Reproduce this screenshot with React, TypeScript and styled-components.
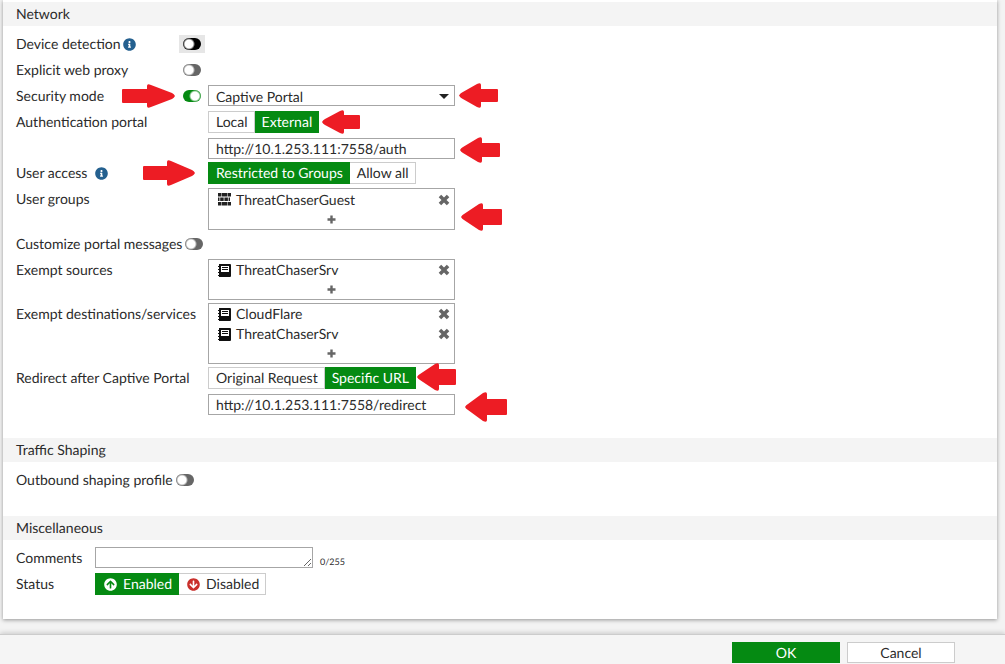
import React, { useState } from "react";
import styled, { createGlobalStyle, css } from "styled-components";
import { FaArrowCircleDown, FaArrowCircleUp, FaInfoCircle } from "react-icons/fa";

const GREEN = "#058a12";

const GlobalStyle = createGlobalStyle`
  *, *::before, *::after { box-sizing: border-box; }
  body {
    margin: 0;
    background: #f3f3f3;
    color: #2b2b2b;
    font: 14px/22px Lato, sans-serif;
    text-rendering: geometricPrecision;
  }
  button, input, select, textarea { font: inherit; color: inherit; text-rendering: inherit; }
`;

const Page = styled.div`
  display: flex;
  flex-direction: column;
  min-height: 100vh;
`;

const Card = styled.main`
  margin: 0 8px 15px 3px;
  padding-top: 2px;
  background: #fff;
  box-shadow: 0 1px 4px rgba(0, 0, 0, 0.4);
`;

const Section = styled.section`
  padding-bottom: 23px;

  &:last-child { padding-bottom: 22px; }
`;

const SectionTitle = styled.h2`
  margin: 0 0 5px;
  padding: 0 13px;
  background: #f4f4f4;
  font-size: 14px;
  font-weight: 400;
  line-height: 24px;
`;

const Row = styled.div<{ $labelWidth?: number }>`
  position: relative;
  display: grid;
  grid-template-columns: ${(p) => p.$labelWidth ?? 192}px minmax(0, 1fr);
  align-items: start;
  min-height: 26px;
  padding: 2px 13px 1px;

  &:last-child { padding-bottom: 0; }
`;

const LabelCell = styled.div<{ $inline?: boolean }>`
  display: flex;
  align-items: center;
  justify-content: ${(p) => (p.$inline ? "flex-start" : "space-between")};
  gap: 3px;
  height: 22px;
  padding-right: 7px;
  white-space: nowrap;
`;

const LabelText = styled.span<{ $gap?: number }>`
  display: flex;
  align-items: center;
  gap: ${(p) => p.$gap ?? 0}px;
`;

const InfoIcon = styled(FaInfoCircle)`
  width: 13px;
  height: 13px;
  color: #24608f;
`;

const Controls = styled.div`
  display: flex;
  flex-direction: column;
  align-items: flex-start;
  gap: 5px;
`;

const SwitchHalo = styled.span<{ $active?: boolean }>`
  display: flex;
  flex: none;
  margin: -3px -4px;
  padding: 3px 4px;
  background: ${(p) => (p.$active ? "#e6e6e6" : "transparent")};
`;

const Switch = styled.input<{ $active?: boolean }>`
  appearance: none;
  width: 18px;
  height: 12px;
  margin: 0;
  border-radius: 6px;
  background: radial-gradient(circle at 6px 6px, #fff 4px, transparent 6px) ${(p) => (p.$active ? "#000" : "#666")};

  &:checked {
    background: radial-gradient(circle at 12px 6px, #fff 4px, transparent 6px) ${GREEN};
  }
`;

const fieldBox = css`
  width: 247px;
  max-width: 100%;
  border: 1px solid #a6a6a6;
  border-radius: 0;
  background: #fff;
`;

const TextInput = styled.input`
  ${fieldBox}
  height: 21px;
  padding: 0 7px;
`;

const SelectWrap = styled.div`
  position: relative;
  width: 247px;
  max-width: 100%;

  &::after {
    content: "";
    position: absolute;
    top: 9px;
    right: 6px;
    border: 5px solid transparent;
    border-top-color: #222;
    border-bottom: 0;
    pointer-events: none;
  }
`;

const Select = styled.select`
  ${fieldBox}
  display: block;
  appearance: none;
  height: 21px;
  padding: 0 7px;
`;

const Segments = styled.div`
  display: flex;
  height: 22px;
`;

const Segment = styled.label`
  display: flex;
  align-items: center;
  gap: 5px;
  padding: 0 6px 0 7px;
  border: 1px solid #ccc;
  background: #fff;
  line-height: 20px;
  white-space: nowrap;

  & + & { border-left-width: 0; }
  &:has(input:checked) {
    border-color: ${GREEN};
    background: ${GREEN};
    color: #fff;
  }
  input {
    position: absolute;
    appearance: none;
    margin: 0;
  }
  svg { width: 13px; height: 13px; margin: 0 1px; }
`;

const EntryList = styled.ul`
  ${fieldBox}
  margin: 0;
  padding: 0;
  list-style: none;
`;

const Entry = styled.li<{ $tall?: boolean }>`
  display: flex;
  align-items: center;
  gap: 5px;
  height: ${(p) => (p.$tall ? 21 : 20)}px;
  padding: 0 4px 0 8px;
  line-height: 20px;

  span { flex: 1; }
`;

const IconButton = styled.button`
  display: flex;
  padding: 0;
  border: 0;
  background: none;
  color: #666;
`;

const AddLine = styled.li`
  display: flex;
  align-items: center;
  justify-content: center;
  height: 19px;
`;

const Comments = styled.div`
  display: flex;
  align-items: flex-end;
  gap: 7px;
`;

const TextArea = styled.textarea`
  display: block;
  width: 218px;
  height: 21px;
  padding: 0 7px;
  border: 1px solid #a6a6a6;
  line-height: 18px;
  resize: both;
`;

const Counter = styled.span`
  font-size: 9px;
  line-height: 12px;
`;

const Footer = styled.footer`
  display: flex;
  flex: 1;
  align-items: flex-start;
  justify-content: flex-end;
  gap: 7px;
  padding: 7px 50px 1px;
  border-top: 1px solid #ccc;
  background: #f5f5f5;
  box-shadow: 0 -1px 5px rgba(0, 0, 0, 0.18);
`;

const FooterButton = styled.button<{ $primary?: boolean }>`
  width: 108px;
  height: 21px;
  padding: 0;
  border: 1px solid ${(p) => (p.$primary ? GREEN : "#ccc")};
  background: ${(p) => (p.$primary ? GREEN : "#fff")};
  color: ${(p) => (p.$primary ? "#fff" : "inherit")};
  line-height: 18px;
`;

const ArrowSvg = styled.svg<{ $x: number; $y: number }>`
  position: absolute;
  left: ${(p) => p.$x}px;
  top: ${(p) => p.$y}px;
  fill: #ed1c24;
  pointer-events: none;
`;

type ArrowProps = { x: number; y: number; w: number; h: number; right?: boolean };

function Arrow({ x, y, w, h, right }: ArrowProps) {
  const head = right ? 28 : 22;
  const top = Math.round(h * 0.22);
  const d = `M0 ${h / 2} Q1 ${h / 2 - 2} 3 ${h / 2 - 3} L${head - 4} 1 Q${head} -1 ${head} 2 V${top} H${w - 1} Q${w} ${top} ${w} ${top + 1} V${h - top - 1} Q${w} ${h - top} ${w - 1} ${h - top} H${head} V${h - 2} Q${head} ${h + 1} ${head - 4} ${h - 1} L3 ${h / 2 + 3} Q1 ${h / 2 + 2} 0 ${h / 2}Z`;
  return (
    <ArrowSvg $x={x} $y={y} width={w} height={h} aria-hidden="true">
      <path d={d} transform={right ? `translate(${w} 0) scale(-1 1)` : undefined} />
    </ArrowSvg>
  );
}

const CrossIcon = () => (
  <svg width="12" height="12" viewBox="0 0 12 12" fill="currentColor">
    <path d="M3.2 .7 6 3.500 8.800 .7 11.300 3.200 8.500 6 11.300 8.800 8.800 11.300 6 8.500 3.200 11.300 .7 8.800 3.500 6 .7 3.200Z" />
  </svg>
);

const PlusIcon = () => (
  <svg width="9" height="9" viewBox="0 0 9 9" fill="currentColor">
    <path d="M3.300 .5h2.400v2.800H8.500v2.400H5.700v2.800H3.300V5.700H.5V3.300h2.800Z" />
  </svg>
);

const GroupIcon = () => (
  <svg width="14" height="13" viewBox="0 0 14 13" fill="#222">
    <path d="M1 0h3.500v3.500H1zM5 0h5v3.500H5zM10.500 0H14v3.500h-3.500zM1 4.500h1.500v3.500H1zM3.200 4.500h3.500v3.500H3.200zM7.400 4.500h3.500v3.500H7.400zM11.600 4.500H13v3.500h-1.400zM1 9h3.500v3.500H1zM5 9h5v3.500H5zM10.500 9H14v3.500h-3.500z" />
  </svg>
);

const AddressIcon = () => (
  <svg width="14" height="13" viewBox="0 0 14 13">
    <path fill="#111" d="M2 0h11q1 0 1 1v11q0 1-1 1H2v-1H1v-1h1V9H1V8h1V6H1V5h1V3H1V2h1Z" />
    <path fill="#fff" d="M4 2h8v6H4z" />
    <path fill="#111" d="M5 3h6v1H5zM5 5h6v1H5z" />
  </svg>
);

type LabelProps = { text: string; htmlFor?: string; info?: number; toggle?: string; on?: boolean; active?: boolean; inline?: boolean };

function Label({ text, htmlFor, info, toggle, on, active, inline }: LabelProps) {
  return (
    <LabelCell $inline={inline}>
      <LabelText $gap={info}>
        {toggle || htmlFor ? <label htmlFor={toggle ?? htmlFor}>{text}</label> : text}
        {info !== undefined && <InfoIcon aria-label="Information" />}
      </LabelText>
      {toggle && (
        <SwitchHalo $active={active}>
          <Switch id={toggle} type="checkbox" role="switch" defaultChecked={on} $active={active} />
        </SwitchHalo>
      )}
    </LabelCell>
  );
}

type Option = { label: string; icon?: React.ReactNode };

function Choice({ name, label, options, initial }: { name: string; label: string; options: Option[]; initial: string }) {
  return (
    <Segments role="radiogroup" aria-label={label}>
      {options.map((o) => (
        <Segment key={o.label}>
          <input type="radio" name={name} value={o.label} defaultChecked={o.label === initial} />
          {o.icon}
          {o.label}
        </Segment>
      ))}
    </Segments>
  );
}

function Entries({ items, group }: { items: string[]; group?: boolean }) {
  return (
    <EntryList>
      {items.map((item) => (
        <Entry key={item} $tall={group}>
          {group ? <GroupIcon /> : <AddressIcon />}
          <span>{item}</span>
          <IconButton type="button" aria-label={`Remove ${item}`}><CrossIcon /></IconButton>
        </Entry>
      ))}
      <AddLine>
        <IconButton type="button" aria-label="Add"><PlusIcon /></IconButton>
      </AddLine>
    </EntryList>
  );
}

export default function App() {
  const [comments, setComments] = useState("");

  return (
    <Page>
      <GlobalStyle />
      <Card>
        <Section>
          <SectionTitle>Network</SectionTitle>
          <Row><Label text="Device detection" info={2} toggle="device" active /></Row>
          <Row><Label text="Explicit web proxy" toggle="proxy" /></Row>
          <Row>
            <Label text="Security mode" toggle="security" on />
            <SelectWrap>
              <Select aria-label="Security mode"><option>Captive Portal</option></Select>
            </SelectWrap>
            <Arrow x={119} y={1} w={53} h={24} right />
            <Arrow x={456} y={0} w={39} h={25} />
          </Row>
          <Row>
            <Label text="Authentication portal" htmlFor="auth-url" />
            <Controls>
              <Choice name="auth" label="Authentication portal" initial="External" options={[{ label: "Local" }, { label: "External" }]} />
              <TextInput id="auth-url" defaultValue="http://10.1.253.111:7558/auth" />
            </Controls>
            <Arrow x={319} y={1} w={38} h={24} />
            <Arrow x={457} y={28} w={40} h={26} />
          </Row>
          <Row>
            <Label text="User access" info={8} />
            <Choice name="access" label="User access" initial="Restricted to Groups" options={[{ label: "Restricted to Groups" }, { label: "Allow all" }]} />
            <Arrow x={140} y={0} w={52} h={26} right />
          </Row>
          <Row>
            <Label text="User groups" />
            <Entries items={["ThreatChaserGuest"]} group />
            <Arrow x={458} y={17} w={41} h={28} />
          </Row>
          <Row><Label text="Customize portal messages" toggle="messages" /></Row>
          <Row>
            <Label text="Exempt sources" />
            <Entries items={["ThreatChaserSrv"]} />
          </Row>
          <Row>
            <Label text="Exempt destinations/services" />
            <Entries items={["CloudFlare", "ThreatChaserSrv"]} />
          </Row>
          <Row>
            <Label text="Redirect after Captive Portal" htmlFor="redirect-url" />
            <Controls>
              <Choice name="redirect" label="Redirect after Captive Portal" initial="Specific URL" options={[{ label: "Original Request" }, { label: "Specific URL" }]} />
              <TextInput id="redirect-url" defaultValue="http://10.1.253.111:7558/redirect" />
            </Controls>
            <Arrow x={414} y={-2} w={39} h={28} />
            <Arrow x={462} y={27} w={42} h={30} />
          </Row>
        </Section>
        <Section>
          <SectionTitle>Traffic Shaping</SectionTitle>
          <Row><Label text="Outbound shaping profile" toggle="shaping" inline /></Row>
        </Section>
        <Section>
          <SectionTitle>Miscellaneous</SectionTitle>
          <Row $labelWidth={79}>
            <Label text="Comments" htmlFor="comments" />
            <Comments>
              <TextArea id="comments" maxLength={255} value={comments} onChange={(e) => setComments(e.target.value)} />
              <Counter>{comments.length}/255</Counter>
            </Comments>
          </Row>
          <Row $labelWidth={79}>
            <Label text="Status" />
            <Choice
              name="status"
              label="Status"
              initial="Enabled"
              options={[
                { label: "Enabled", icon: <FaArrowCircleUp /> },
                { label: "Disabled", icon: <FaArrowCircleDown color="#c9302c" /> },
              ]}
            />
          </Row>
        </Section>
      </Card>
      <Footer>
        <FooterButton type="submit" $primary>OK</FooterButton>
        <FooterButton type="button">Cancel</FooterButton>
      </Footer>
    </Page>
  );
}
